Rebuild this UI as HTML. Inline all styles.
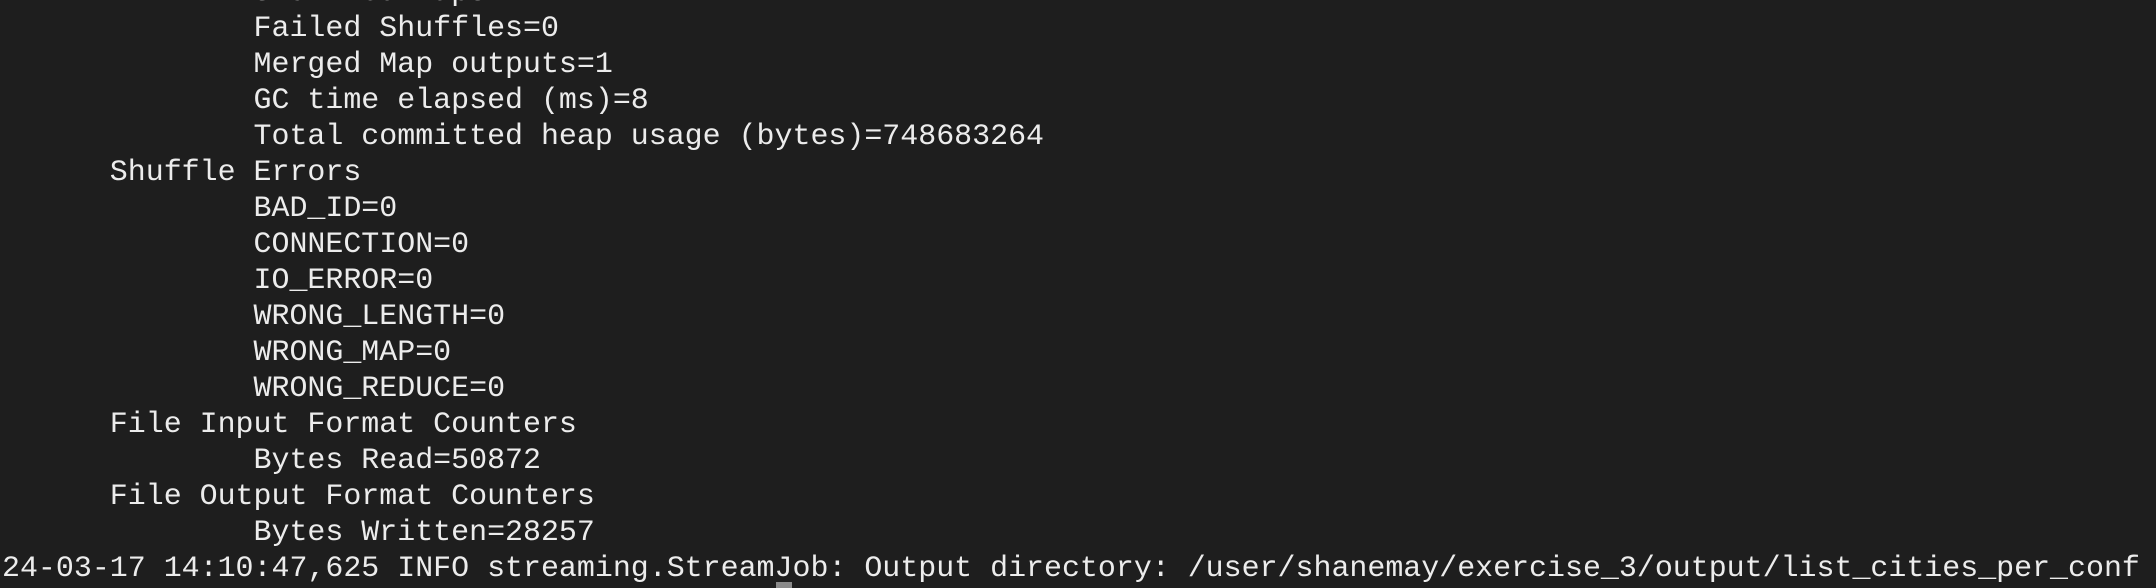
<!DOCTYPE html>
<html><head><meta charset="utf-8"><style>
html,body{margin:0;padding:0;background:#1e1e1e;width:2156px;height:588px;overflow:hidden}
pre{position:absolute;left:2px;top:-26px;margin:0;font-family:"Liberation Mono",monospace;font-size:29.95px;line-height:36px;color:#ececec}
.cur{position:absolute;left:776px;top:582px;width:16px;height:6px;background:#8a8a8a}
</style></head><body>
<pre>              Shuffled Maps =1
              Failed Shuffles=0
              Merged Map outputs=1
              GC time elapsed (ms)=8
              Total committed heap usage (bytes)=748683264
      Shuffle Errors
              BAD_ID=0
              CONNECTION=0
              IO_ERROR=0
              WRONG_LENGTH=0
              WRONG_MAP=0
              WRONG_REDUCE=0
      File Input Format Counters
              Bytes Read=50872
      File Output Format Counters
              Bytes Written=28257
24-03-17 14:10:47,625 INFO streaming.StreamJob: Output directory: /user/shanemay/exercise_3/output/list_cities_per_conf</pre>
<div class="cur"></div>
</body></html>
